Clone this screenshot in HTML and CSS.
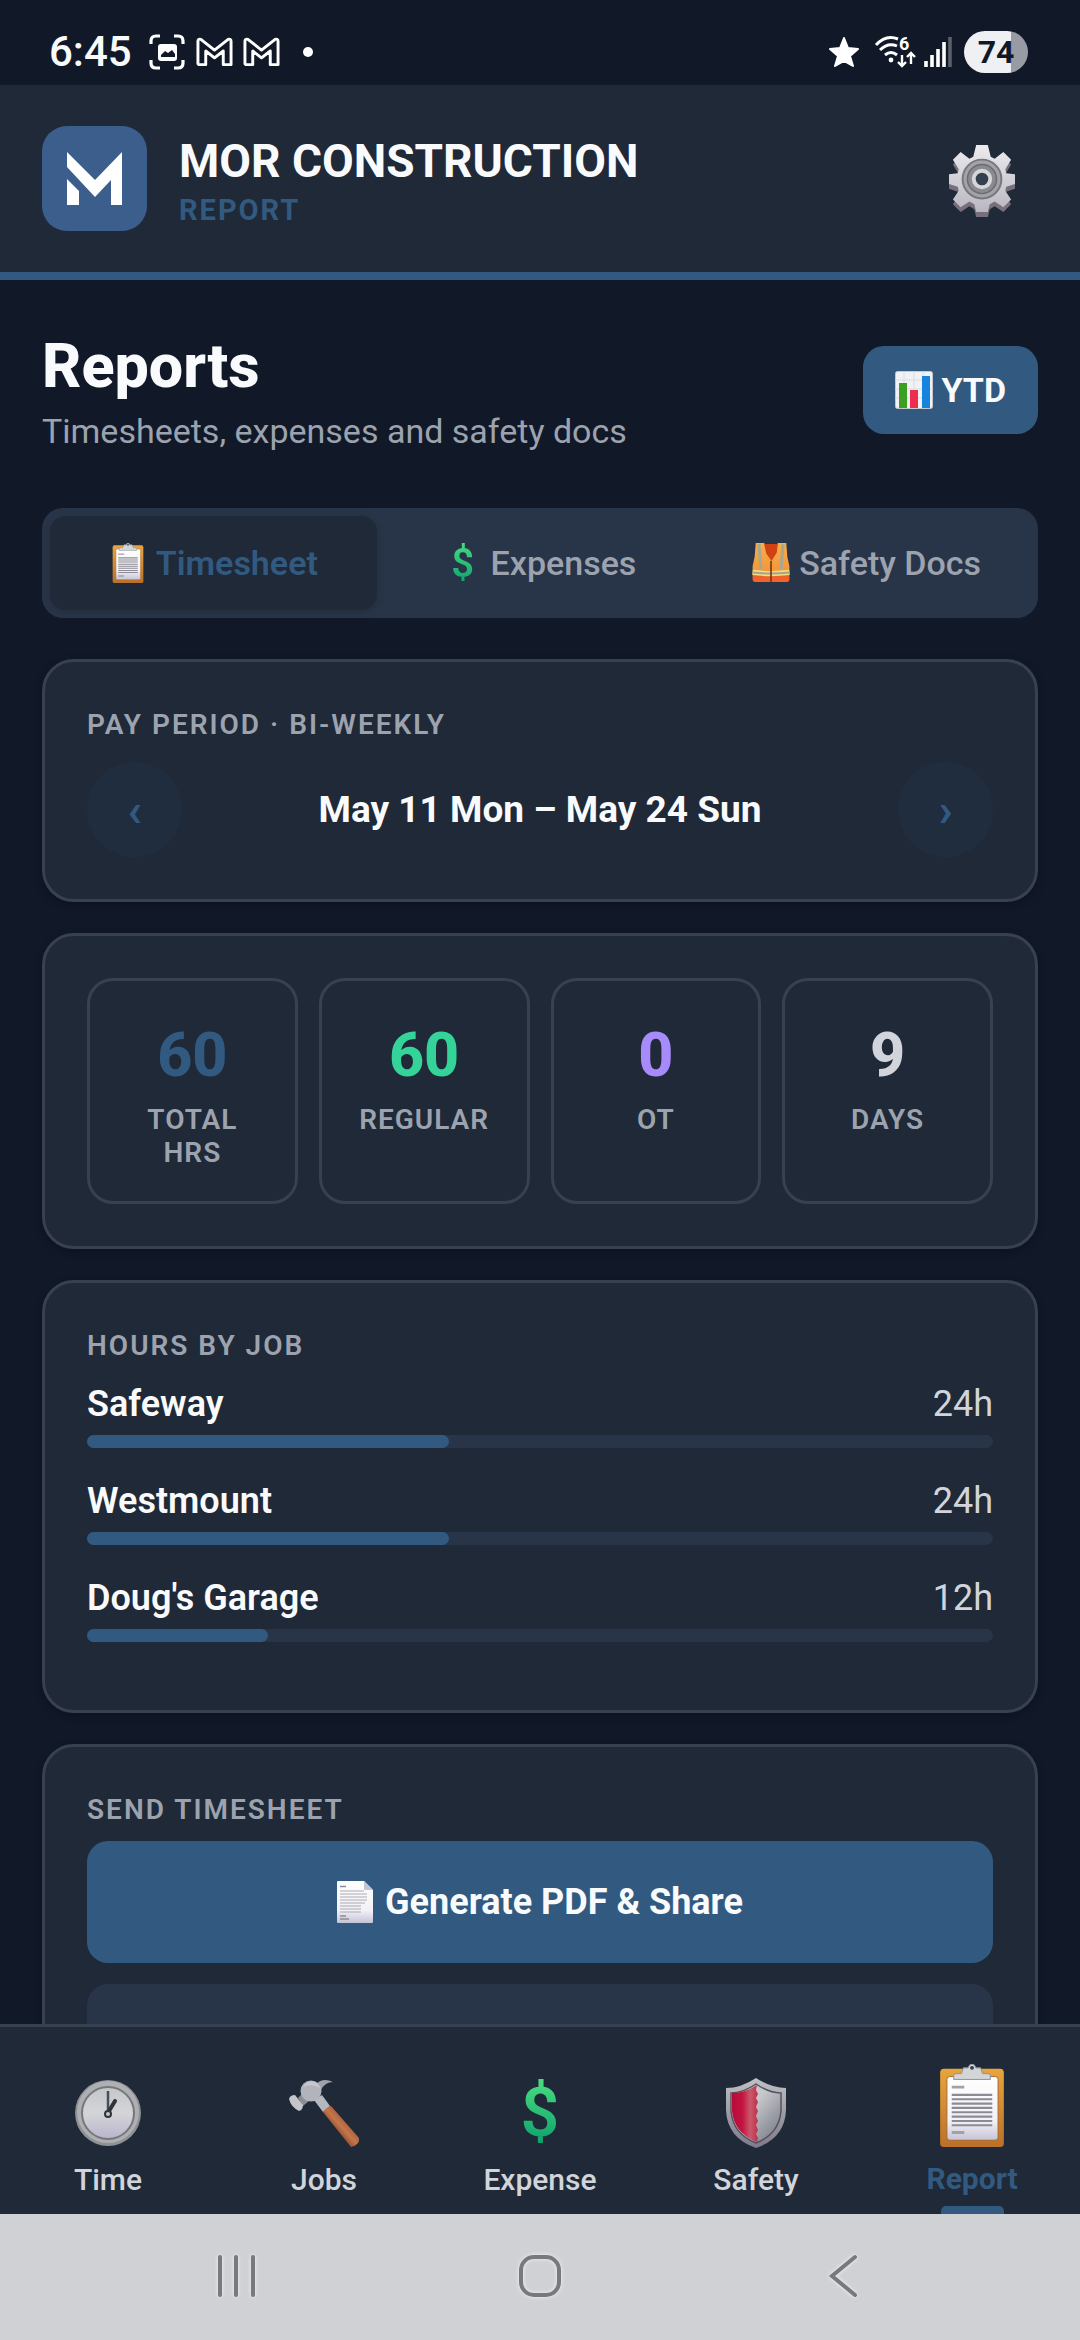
FILE: index.html
```html
<!DOCTYPE html>
<html lang="en">
<head>
  <meta charset="UTF-8">
  <meta name="viewport" content="width=device-width, initial-scale=1">
  <title>MOR Construction - Report</title>
  <link rel="stylesheet" href="styles.css">
</head>
<body>
  <!-- Shared icons -->
  <svg class="defs" aria-hidden="true">
    <defs>
      <linearGradient id="steel" x1="0" y1="0" x2="0" y2="1">
        <stop offset="0" stop-color="#ececee"/>
        <stop offset="1" stop-color="#b9b6c1"/>
      </linearGradient>
      <linearGradient id="rim" x1="0" y1="0" x2="0" y2="1">
        <stop offset="0" stop-color="#bfc1c4"/>
        <stop offset="0.6" stop-color="#96979d"/>
        <stop offset="1" stop-color="#7d7a8c"/>
      </linearGradient>
      <linearGradient id="paper" x1="0" y1="0" x2="0" y2="1">
        <stop offset="0" stop-color="#ffffff"/>
        <stop offset="0.7" stop-color="#f2f1f5"/>
        <stop offset="1" stop-color="#c6c3d6"/>
      </linearGradient>
      <linearGradient id="board" x1="0" y1="0" x2="0" y2="1">
        <stop offset="0" stop-color="#e8a53c"/>
        <stop offset="1" stop-color="#bb7029"/>
      </linearGradient>
      <linearGradient id="dial" x1="0" y1="0" x2="0" y2="1">
        <stop offset="0" stop-color="#c4c6c9"/>
        <stop offset="0.5" stop-color="#d4d5d8"/>
        <stop offset="1" stop-color="#b9b4cc"/>
      </linearGradient>
      <linearGradient id="handle" x1="0" y1="1" x2="1" y2="0">
        <stop offset="0.36" stop-color="#8f4a2c"/>
        <stop offset="0.5" stop-color="#c4764c"/>
        <stop offset="0.62" stop-color="#b0643d"/>
      </linearGradient>
      <linearGradient id="shieldRed" x1="0" y1="0" x2="1" y2="0">
        <stop offset="0" stop-color="#b8093b"/>
        <stop offset="0.4" stop-color="#c3143f"/>
        <stop offset="0.7" stop-color="#c9596a"/>
        <stop offset="1" stop-color="#bd2f4c"/>
      </linearGradient>
      <linearGradient id="shieldGrey" x1="0" y1="0" x2="1" y2="1">
        <stop offset="0.4" stop-color="#c6c8cb"/>
        <stop offset="1" stop-color="#6e7080"/>
      </linearGradient>
      <linearGradient id="vest" x1="0" y1="0" x2="0" y2="1">
        <stop offset="0" stop-color="#f7b04a"/>
        <stop offset="0.7" stop-color="#f5973a"/>
        <stop offset="0.8" stop-color="#ee5f26"/>
        <stop offset="1" stop-color="#f0642a"/>
      </linearGradient>
    </defs>
    <symbol id="icon-clipboard" viewBox="0 0 66 86">
      <rect x="0" y="5" width="66" height="81" rx="4" fill="url(#board)"/>
      <rect x="7" y="13" width="53" height="66" rx="3" fill="url(#paper)" stroke="#a9672a" stroke-width="1"/>
      <path d="M14 16v-4q0-2 3-2h5l2-6h5q1-4 4-4t4 4h5l2 6h5q3 0 3 2v4z" fill="#d3d5d6" stroke="#8890a0" stroke-width="1"/>
      <circle cx="33" cy="4" r="2" fill="#333b47"/>
      <path d="M12 24h13M12 71h13" stroke="#a2a1a8" stroke-width="3"/>
      <path d="M12 32h42M12 36.500h42M12 41h42M12 45.500h42M12 50h42M12 54.500h42M12 59h42M12 63.500h42" stroke="#8b8a95" stroke-width="2.200"/>
    </symbol>
  </svg>

  <!-- Phone status bar -->
  <div class="status-bar">
    <span class="clock">6:45</span>
    <svg class="status-shot" viewBox="0 0 36 36" aria-hidden="true">
      <path d="M2 10V7q0-5 5-5h4M25 2h4q5 0 5 5v3M34 26v3q0 5-5 5h-4M11 34H7q-5 0-5-5v-3" fill="none" stroke="#fff" stroke-width="3.200"/>
      <rect x="9" y="10" width="19" height="17" rx="3" fill="#fff"/>
      <path d="M12 23v-2l4-4 3 2 4-3 3 4v3z" fill="#111827"/>
    </svg>
    <svg class="status-mail" viewBox="0 0 38 30" aria-hidden="true">
      <path d="M2 27V4q0-3 3-2l14 11L33 2q3-1 3 2v24h-8V14l-9 7-9-7v14H3z" fill="none" stroke="#fff" stroke-width="3" stroke-linejoin="round"/>
    </svg>
    <svg class="status-mail" viewBox="0 0 38 30" aria-hidden="true">
      <path d="M2 27V4q0-3 3-2l14 11L33 2q3-1 3 2v24h-8V14l-9 7-9-7v14H3z" fill="none" stroke="#fff" stroke-width="3" stroke-linejoin="round"/>
    </svg>
    <span class="status-dot"></span>
    <div class="status-right">
      <svg class="status-star" viewBox="0 0 32 32" aria-hidden="true">
        <path d="M16 2l4 10 10 1-8 7 3 10-9-5-9 5 3-10-8-7 10-1z" fill="#fff" stroke="#fff" stroke-width="2" stroke-linejoin="round"/>
      </svg>
      <svg class="status-wifi" viewBox="0 0 42 34" aria-hidden="true">
        <path d="M2 10Q12-1 24 4M6 15q8-8 17-4M11 20q6-5 12 0" fill="none" stroke="#fff" stroke-width="3"/>
        <circle cx="17" cy="25" r="2.400" fill="#fff"/>
        <text x="25" y="15" font-size="18" font-weight="700" fill="#fff">6</text>
        <path d="M28 20v11M24 27l4 4 4-4M37 29V18M33 22l4-4 4 4" fill="none" stroke="#fff" stroke-width="2.400"/>
      </svg>
      <svg class="status-signal" viewBox="0 0 28 31" aria-hidden="true">
        <path d="M2 31v-6M8 31V19M14 31V13M20 31V6" stroke="#fff" stroke-width="3.600"/>
        <path d="M26 31V1" stroke="#5b606b" stroke-width="3.600"/>
      </svg>
      <span class="battery">74</span>
    </div>
  </div>

  <header class="app-header">
    <svg class="logo" viewBox="0 0 105 105" aria-hidden="true">
      <rect width="105" height="105" rx="25" fill="#3c5e8d"/>
      <path d="M25 26L53 54 80 26V79H69V54L53 71 25 41zM25 53L37 65V79H25z" fill="#fff"/>
    </svg>
    <div class="brand">
      <div class="brand-name">MOR CONSTRUCTION</div>
      <div class="brand-page">REPORT</div>
    </div>
    <button class="settings" aria-label="Settings">
      <svg viewBox="0 0 68 74" aria-hidden="true">
        <path transform="translate(0 5)" fill="#77707c" d="M28 0h12l3 12 4 2 9-7 8 8-6 10 1 4 9 1v10l-9 3-1 4 6 9-8 8-9-6-5 3-2 8H28l-2-8-5-3-9 6-8-8 6-9-1-4-9-3V30l9-1 1-4-6-10 8-8 9 7 4-2z"/>
        <path fill="url(#steel)" d="M28 0h12l3 12 4 2 9-7 8 8-6 10 1 4 9 1v10l-9 3-1 4 6 9-8 8-9-6-5 3-2 8H28l-2-8-5-3-9 6-8-8 6-9-1-4-9-3V30l9-1 1-4-6-10 8-8 9 7 4-2z"/>
        <circle cx="34" cy="35" r="20" fill="#a3a2a8" stroke="#77777d" stroke-width="2"/>
        <circle cx="34" cy="35" r="15" fill="#8a8a91" stroke="#6b6b73" stroke-width="1.500"/>
        <circle cx="34" cy="35" r="8.500" fill="#34404e" stroke="#d5d6da" stroke-width="4"/>
      </svg>
    </button>
  </header>

  <main class="content">
    <div class="page-head">
      <div>
        <h1>Reports</h1>
        <p class="subtitle">Timesheets, expenses and safety docs</p>
      </div>
      <button class="ytd-button">
        <svg class="emoji" viewBox="0 0 38 38" aria-hidden="true">
          <rect x="0.500" y="0.500" width="37" height="37" rx="2" fill="#f1f2f5" stroke="#c3c6cc"/>
          <path d="M0 9h38M0 18h38M0 27h38M9 0v38M19 0v38M28 0v38" stroke="#d9dce1" stroke-width="1"/>
          <rect x="4" y="12" width="8" height="25" fill="#3d9f22"/>
          <rect x="15" y="19" width="8" height="18" fill="#ec2d50"/>
          <rect x="27" y="5" width="8" height="32" fill="#1683dc"/>
        </svg>
        YTD
      </button>
    </div>

    <div class="tabs" role="tablist">
      <button class="tab active" role="tab" aria-selected="true">
        <svg class="emoji" aria-hidden="true"><use href="#icon-clipboard"/></svg>
        Timesheet
      </button>
      <button class="tab" role="tab" aria-selected="false">
        <span class="dollar" aria-hidden="true">$</span>
        Expenses
      </button>
      <button class="tab" role="tab" aria-selected="false">
        <svg class="emoji" viewBox="0 0 35 38" aria-hidden="true">
          <path d="M3 0h8l7 16 6-16h8l1 13 2 9v13q0 2-2 2H2q-2 0-2-2V22l2-9z" fill="url(#vest)"/>
          <path d="M11 1h13l-1 8-5 8-5-7z" fill="#cf4213"/>
          <path d="M6 1l2 24M29 1l-2 24" stroke="#a9a88f" stroke-width="3"/>
          <path d="M0 28q9 1 17.500 1T35 28" fill="none" stroke="#f2dd7c" stroke-width="5"/>
          <path d="M0 28q9 1 17.500 1T35 28" fill="none" stroke="#a3a494" stroke-width="2"/>
          <path d="M17.500 17v20" stroke="#6e3417" stroke-width="1.500"/>
        </svg>
        Safety Docs
      </button>
    </div>

    <!-- Pay period -->
    <section class="card">
      <h2 class="card-label">PAY PERIOD · BI-WEEKLY</h2>
      <div class="period">
        <button class="period-arrow" aria-label="Previous period">‹</button>
        <span class="period-range">May 11 Mon – May 24 Sun</span>
        <button class="period-arrow" aria-label="Next period">›</button>
      </div>
    </section>

    <!-- Totals -->
    <section class="card stats">
      <div class="stat">
        <div class="stat-value total">60</div>
        <div class="stat-label">TOTAL HRS</div>
      </div>
      <div class="stat">
        <div class="stat-value regular">60</div>
        <div class="stat-label">REGULAR</div>
      </div>
      <div class="stat">
        <div class="stat-value ot">0</div>
        <div class="stat-label">OT</div>
      </div>
      <div class="stat">
        <div class="stat-value days">9</div>
        <div class="stat-label">DAYS</div>
      </div>
    </section>

    <!-- Hours by job -->
    <section class="card">
      <h2 class="card-label">HOURS BY JOB</h2>
      <div class="job">
        <div class="job-row"><span class="job-name">Safeway</span><span>24h</span></div>
        <div class="bar"><div class="bar-fill" style="width: 40%"></div></div>
      </div>
      <div class="job">
        <div class="job-row"><span class="job-name">Westmount</span><span>24h</span></div>
        <div class="bar"><div class="bar-fill" style="width: 40%"></div></div>
      </div>
      <div class="job">
        <div class="job-row"><span class="job-name">Doug's Garage</span><span>12h</span></div>
        <div class="bar"><div class="bar-fill" style="width: 20%"></div></div>
      </div>
    </section>

    <section class="card">
      <h2 class="card-label">SEND TIMESHEET</h2>
      <div class="actions">
        <button class="action primary">
          <svg class="doc" viewBox="0 0 36 42" aria-hidden="true">
            <path d="M0 1q0-1 1-1h26l9 9v32q0 1-1 1H1q-1 0-1-1z" fill="url(#paper)"/>
            <path d="M27 0v8q0 1 1 1h8z" fill="#c3c5d2"/>
            <path d="M3 5.500h6M3 35h6M3 38h9" stroke="#8d8c99" stroke-width="1.500"/>
            <path d="M3 10h24M3 13h27M3 16h27M3 19h27M3 22h25M3 25h21M3 28h21M3 31h21" stroke="#aaa9b3" stroke-width="1.200"/>
          </svg>
          Generate PDF &amp; Share
        </button>
        <button class="action" aria-label="More options"></button>
      </div>
    </section>
  </main>

  <footer class="bottom">
    <nav class="tab-bar">
      <a class="nav-item" href="#time">
        <svg class="nav-icon" viewBox="0 0 70 70" aria-hidden="true">
          <circle cx="35" cy="35" r="33" fill="#8f9195"/>
          <circle cx="35" cy="34" r="31" fill="#adafb2"/>
          <circle cx="35" cy="35" r="26" fill="url(#dial)" stroke="#75777b" stroke-width="2"/>
          <path d="M35 13v22" stroke="#4a4f56" stroke-width="2.500"/>
          <path d="M36 33l6-10" stroke="#2f353d" stroke-width="4" stroke-linecap="round"/>
          <circle cx="35" cy="36" r="3" fill="#c8c8ce" stroke="#2f353d" stroke-width="2"/>
        </svg>
        <span>Time</span>
      </a>
      <a class="nav-item" href="#jobs">
        <svg class="nav-icon" viewBox="0 0 70 70" aria-hidden="true">
          <path d="M34 34q2-5 8-6l28 32q1 3-2 6t-6 3z" fill="url(#handle)"/>
          <path d="M25 22l8-5 8 11q-4 2-7 6z" fill="#b4b8bf"/>
          <path d="M27 6Q34-1 44 4q-8 0-12 8z" fill="#9fa2aa"/>
          <path d="M9 20l5-5 7 7-7 6z" fill="#8b8e97"/>
          <circle cx="22" cy="13" r="10.500" fill="#b2b4bc"/>
          <path d="M14 9q4-7 12-5 4 2 5 6-8-5-17-1z" fill="#c6c8cd"/>
          <path d="M0 21q1-4 6-4l8 10q0 5-4 6-8-4-10-12z" fill="#c4c6cc"/>
        </svg>
        <span>Jobs</span>
      </a>
      <a class="nav-item" href="#expense">
        <span class="nav-icon nav-dollar" aria-hidden="true">$</span>
        <span>Expense</span>
      </a>
      <a class="nav-item" href="#safety">
        <svg class="nav-icon" viewBox="0 0 70 70" aria-hidden="true">
          <path d="M35 0Q50 10 65 10v22Q64 60 35 70 6 60 5 32V10Q20 10 35 0z" fill="url(#rim)"/>
          <path d="M35 6Q48 15 60 15v18Q58 56 35 65 12 56 10 33V15Q22 15 35 6z" fill="url(#shieldGrey)" stroke="#55515e" stroke-width="1.500"/>
          <path d="M36 7Q24 15 11 15v18q2 22 25 31l1-4-2-4 2-4-2-5 2-4-2-5 2-5-2-4 2-5-2-4 2-4-2-4z" fill="url(#shieldRed)"/>
        </svg>
        <span>Safety</span>
      </a>
      <a class="nav-item active" href="#report">
        <svg class="nav-icon" aria-hidden="true"><use href="#icon-clipboard"/></svg>
        <span>Report</span>
      </a>
    </nav>
    <!-- Android navigation -->
    <div class="system-nav">
      <button aria-label="Recent apps">
        <svg viewBox="0 0 44 44" aria-hidden="true"><path d="M6 3v38M22 3v38M39 3v38"/></svg>
      </button>
      <button aria-label="Home">
        <svg viewBox="0 0 44 44" aria-hidden="true"><rect x="3" y="3" width="38" height="38" rx="13"/></svg>
      </button>
      <button aria-label="Back">
        <svg viewBox="0 0 44 44" aria-hidden="true"><path d="M33 3L10 22l23 19"/></svg>
      </button>
    </div>
  </footer>
</body>
</html>
```
FILE: styles.css
```css
* {
  box-sizing: border-box;
}
body {
  margin: 0;
  height: 100vh;
  display: flex;
  flex-direction: column;
  overflow: hidden;
  background: #111827;
  color: #f9fafb;
  font-family: Roboto, "Liberation Sans", sans-serif;
}
button {
  border: none;
  padding: 0;
  background: none;
  color: inherit;
  font-family: inherit;
  cursor: pointer;
}
.defs {
  position: absolute;
  width: 0;
  height: 0;
}

/* Status bar */
.status-bar {
  display: flex;
  align-items: center;
  flex: none;
  height: 85px;
  padding: 18px 52px 0 49px;
}
.clock {
  margin-right: 17px;
  font-size: 42px;
  font-weight: 500;
}
.status-shot {
  width: 36px;
  height: 36px;
  margin-right: 11px;
}
.status-mail {
  width: 37px;
  height: 30px;
  margin-right: 10px;
}
.status-dot {
  width: 10px;
  height: 10px;
  margin-left: 13px;
  border-radius: 50%;
  background: #fff;
}
.status-right {
  display: flex;
  align-items: center;
  margin-left: auto;
}
.status-star {
  width: 32px;
  height: 32px;
  margin-right: 14px;
}
.status-wifi {
  overflow: visible;
  width: 42px;
  height: 34px;
  margin-right: 8px;
}
.status-signal {
  width: 28px;
  height: 31px;
  margin-right: 12px;
}
.battery {
  width: 64px;
  height: 42px;
  border-radius: 21px;
  background: linear-gradient(to right, #eef0f3 74%, #989ba3 74%);
  color: #111827;
  font-size: 32px;
  font-weight: 700;
  line-height: 42px;
  text-align: center;
}

/* Header */
.app-header {
  display: flex;
  align-items: center;
  flex: none;
  height: 195px;
  padding: 0 42px;
  background: #1f2937;
  border-bottom: 8px solid #325a80;
}
.logo {
  width: 105px;
  height: 105px;
  margin-right: 32px;
}
.brand {
  padding-top: 4px;
}
.brand-name {
  font-size: 46px;
  font-weight: 700;
  line-height: 52px;
}
.brand-page {
  margin-top: 6px;
  color: #325a80;
  font-size: 29px;
  font-weight: 700;
  line-height: 34px;
  letter-spacing: 2px;
}
.settings {
  display: flex;
  justify-content: center;
  width: 113px;
  padding-top: 4px;
  margin-left: auto;
}
.settings svg {
  width: 66px;
  height: 72px;
}

/* Content */
.content {
  display: flex;
  flex-direction: column;
  flex: 1;
  gap: 31px;
  min-height: 0;
  padding: 50px 42px 0;
  overflow: hidden;
}
.content > * {
  flex: none;
}
.page-head {
  display: flex;
  align-items: center;
  justify-content: space-between;
  margin-bottom: 27px;
}
h1 {
  margin: 0;
  font-size: 61px;
  font-weight: 800;
  line-height: 72px;
}
.subtitle {
  margin: 10px 0 0;
  color: #9ca3af;
  font-size: 34px;
  line-height: 38px;
}
.emoji {
  width: 38px;
  height: 40px;
}
.ytd-button {
  display: flex;
  align-items: center;
  gap: 9px;
  height: 88px;
  padding: 0 32px;
  border-radius: 21px;
  background: #325a80;
  font-size: 34px;
  font-weight: 700;
}
.tabs {
  display: grid;
  grid-template-columns: repeat(3, 1fr);
  padding: 8px;
  border-radius: 21px;
  background: #283548;
  margin-bottom: 10px;
}
.tab {
  display: flex;
  align-items: center;
  justify-content: center;
  gap: 9px;
  height: 94px;
  border-radius: 16px;
  color: #9ca3af;
  font-size: 34px;
  font-weight: 500;
}
.tab.active {
  background: #1f2937;
  box-shadow: 0 2px 8px rgba(0, 0, 0, 0.15);
  color: #325a80;
  font-weight: 600;
}
.dollar,
.nav-dollar {
  background: linear-gradient(#4ade80, #0a9d6c);
  background-clip: text;
  color: transparent;
  text-align: center;
}
.dollar {
  width: 38px;
  font-size: 40px;
  font-weight: 600;
}

/* Cards */
.card {
  padding: 42px;
  border: 3px solid #374151;
  border-radius: 32px;
  background: #1f2937;
  box-shadow: 0 3px 8px rgba(0, 0, 0, 0.25);
}
.card-label {
  margin: 0 0 10px;
  color: #9ca3af;
  font-size: 28px;
  font-weight: 600;
  line-height: 42px;
  letter-spacing: 2px;
}
.period {
  display: flex;
  align-items: center;
  justify-content: space-between;
  padding-top: 6px;
}
.period-arrow {
  width: 95px;
  height: 95px;
  border-radius: 50%;
  background: #202d3f;
  color: #325a80;
  font-size: 47px;
  font-weight: 700;
  line-height: 95px;
}
.period-range {
  font-size: 37px;
  font-weight: 700;
}
.stats {
  display: grid;
  grid-template-columns: repeat(4, 1fr);
  gap: 21px;
}
.stat {
  padding: 32px;
  border: 3px solid #374151;
  border-radius: 26px;
  text-align: center;
}
.stat-value {
  font-size: 61px;
  font-weight: 800;
  line-height: 84px;
}
.total {
  color: #325a80;
}
.regular {
  color: #34d399;
}
.ot {
  color: #a78bfa;
}
.days {
  color: #d1d5db;
}
.stat-label {
  margin-top: 6px;
  color: #9ca3af;
  font-size: 28px;
  font-weight: 600;
  line-height: 33px;
  letter-spacing: 1px;
}
.job {
  padding: 6px 0 26px;
}
.job-row {
  display: flex;
  justify-content: space-between;
  color: #d1d5db;
  font-size: 36px;
  line-height: 42px;
}
.job-name {
  color: #f9fafb;
  font-weight: 600;
}
.bar {
  height: 13px;
  margin-top: 10px;
  border-radius: 8px;
  background: #283548;
}
.bar-fill {
  height: 100%;
  border-radius: 8px;
  background: #325a80;
}
.actions {
  display: grid;
  gap: 21px;
}
.action {
  display: flex;
  align-items: center;
  justify-content: center;
  gap: 12px;
  height: 122px;
  border-radius: 21px;
  background: #283548;
  font-size: 36px;
  font-weight: 700;
}
.action.primary {
  background: #325a80;
}
.doc {
  width: 36px;
  height: 42px;
}

/* Bottom navigation */
.bottom {
  flex: none;
}
.tab-bar {
  display: grid;
  grid-template-columns: repeat(5, 1fr);
  height: 190px;
  border-top: 3px solid #374151;
  background: #1f2937;
}
.nav-item {
  display: flex;
  flex-direction: column;
  align-items: center;
  position: relative;
  padding-top: 51px;
  color: #d1d5db;
  font-size: 30px;
  font-weight: 500;
  line-height: 36px;
  text-decoration: none;
}
.nav-icon {
  width: 70px;
  height: 70px;
  margin-bottom: 14px;
}
.nav-dollar {
  font-size: 68px;
  font-weight: 600;
  line-height: 70px;
}
.nav-item.active {
  padding-top: 37px;
  color: #325a80;
  font-weight: 700;
}
.nav-item.active .nav-icon {
  height: 83px;
}
.nav-item.active::after {
  content: "";
  position: absolute;
  bottom: 0;
  width: 63px;
  height: 8px;
  border-radius: 5px 5px 0 0;
  background: #325a80;
}
.system-nav {
  display: flex;
  justify-content: space-around;
  height: 126px;
  padding: 0 84px;
  background: #d0d1d5;
}
.system-nav button {
  flex: 1;
}
.system-nav svg {
  width: 44px;
  height: 44px;
  fill: none;
  stroke: #77797d;
  stroke-width: 4;
  stroke-linecap: round;
  filter: drop-shadow(0 0 2px #f4f4f6);
}
```
